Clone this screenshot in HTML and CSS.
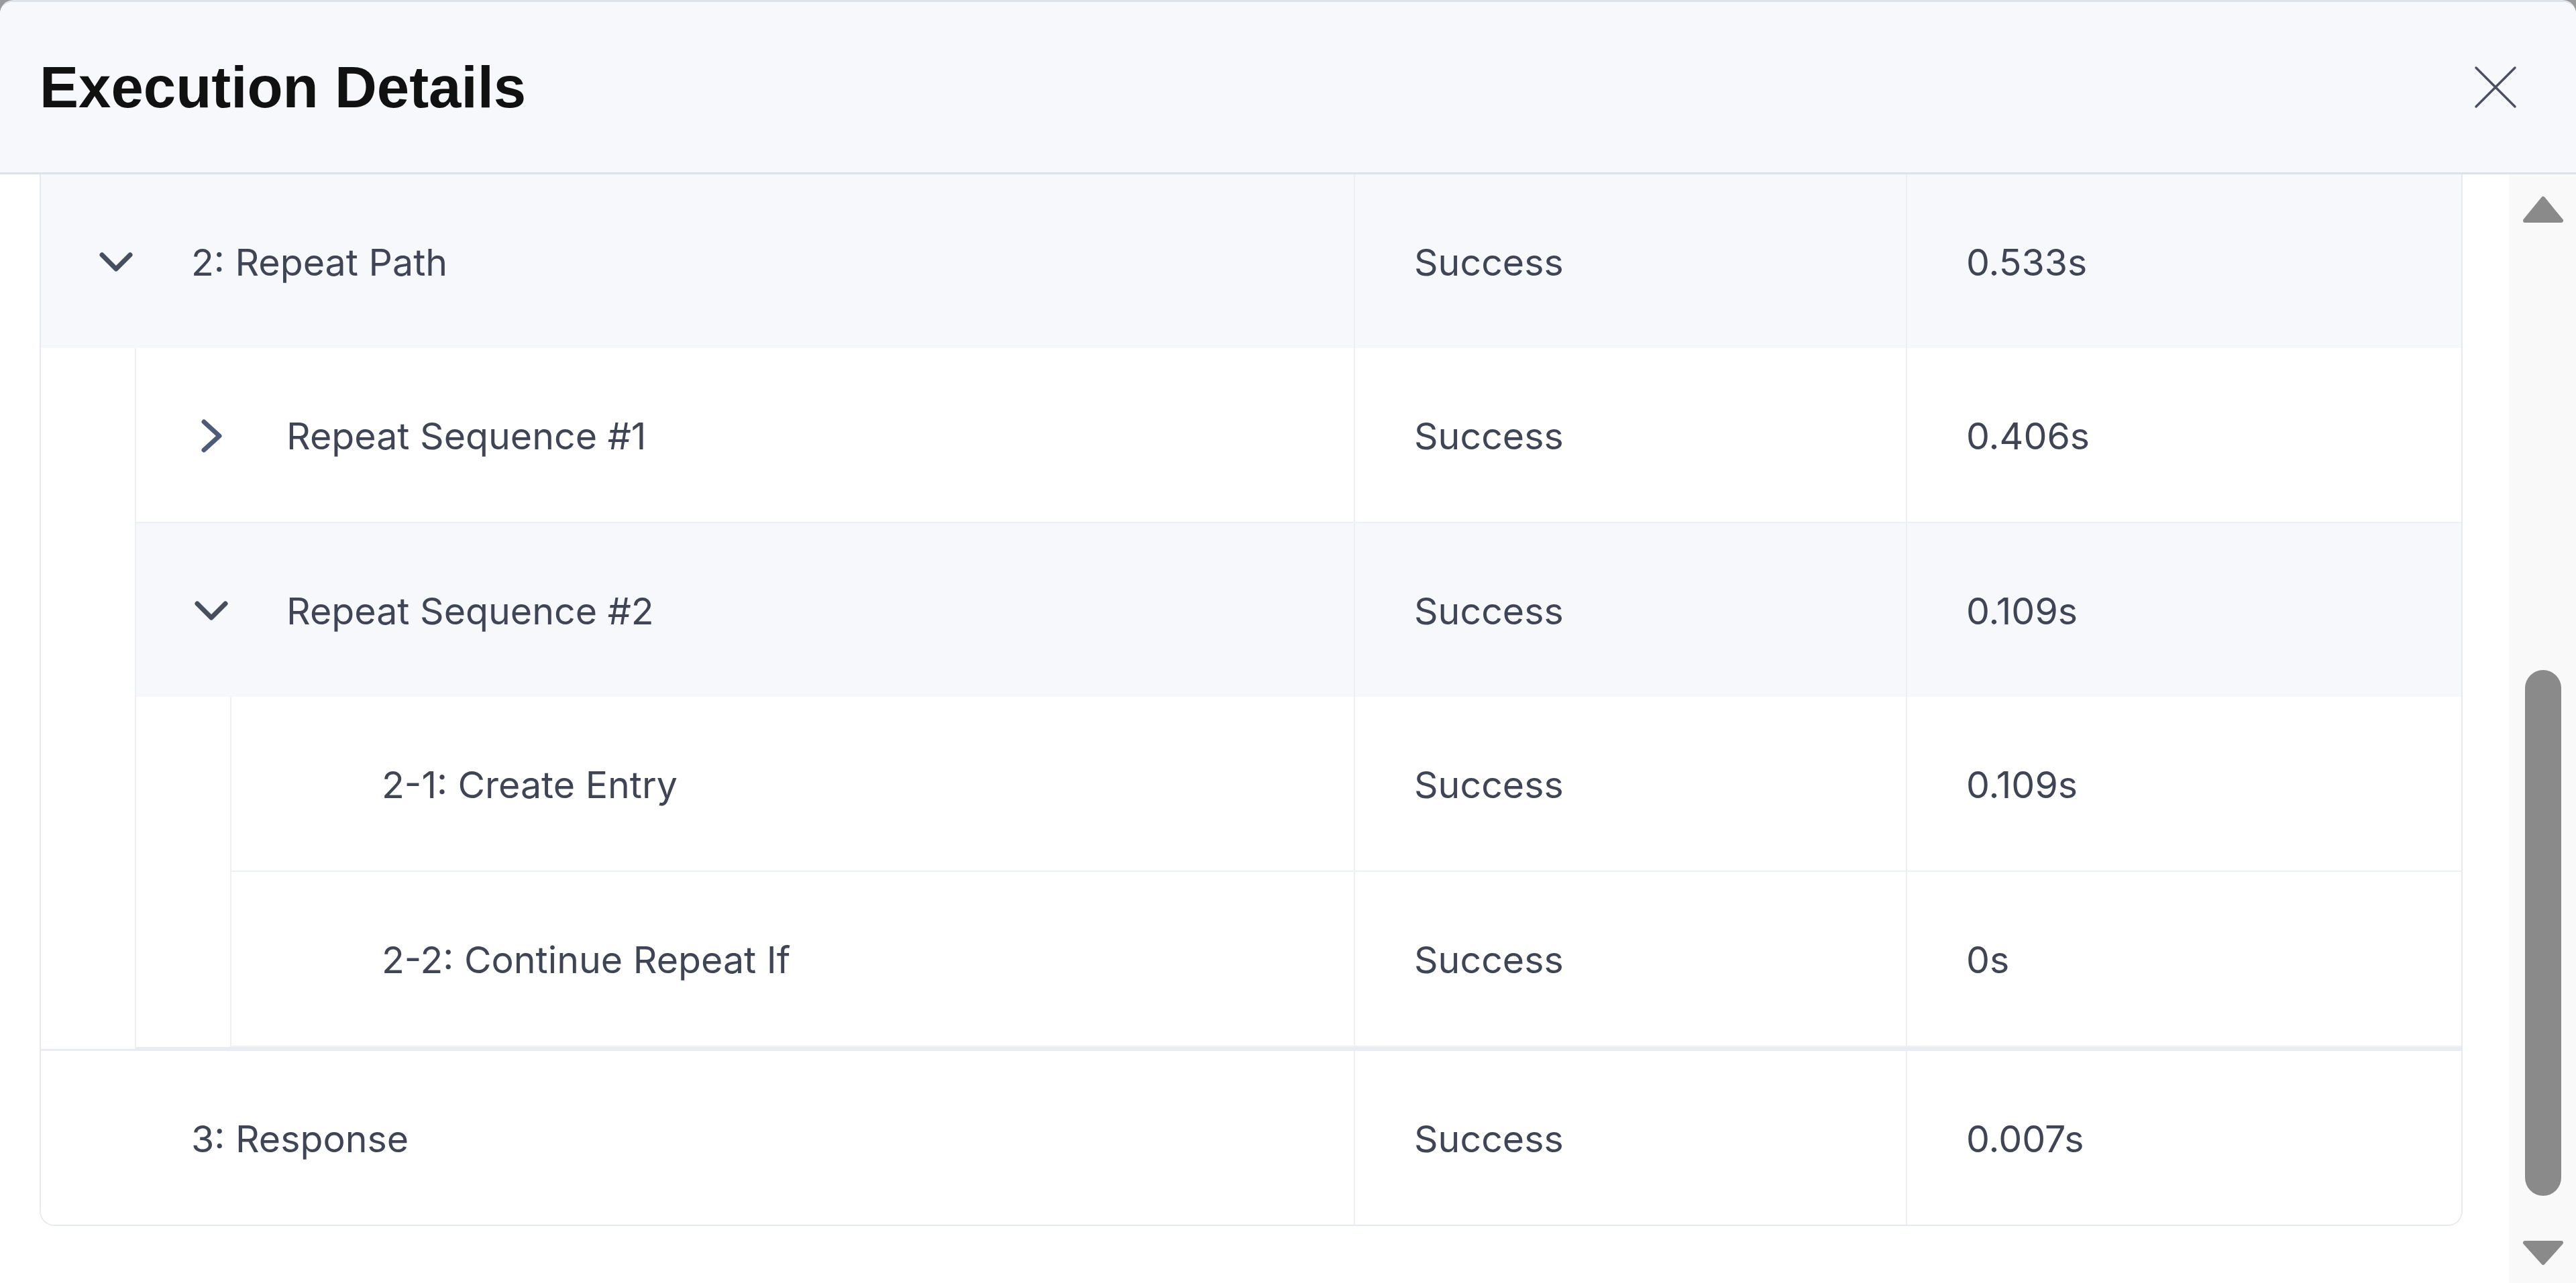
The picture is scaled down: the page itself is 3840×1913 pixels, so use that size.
FILE: index.html
```html
<!DOCTYPE html>
<html lang="en">
<head>
    <meta charset="UTF-8">
    <meta name="viewport" content="width=device-width, initial-scale=1.0">
    <title>Execution Details</title>
    <link rel="stylesheet" href="styles.css">
</head>
<body>
    <div class="modal">
        <header class="modal-header">
            <h1 class="modal-title">Execution Details</h1>
            <button class="close-btn" aria-label="Close">
                <svg width="64" height="64" viewBox="0 0 64 64"><path d="M3 3 L61 61 M61 3 L3 61" /></svg>
            </button>
        </header>
        <div class="modal-body">
            <div class="content">
                <div class="tree-card">
                    <div class="item">
                        <div class="row expanded">
                            <div class="cell name">
                                <span class="toggle"><svg class="chev-down" width="50" height="29" viewBox="0 0 50 29"><path d="M4 4 L25 25 L46 4" /></svg></span>
                                <span class="label">2: Repeat Path</span>
                            </div>
                            <div class="cell status">Success</div>
                            <div class="cell duration">0.533s</div>
                        </div>
                        <div class="children">
                            <div class="item">
                                <div class="row">
                                    <div class="cell name">
                                        <span class="toggle"><svg class="chev-right" width="31" height="50" viewBox="0 0 31 50"><path d="M4 4 L27 25 L4 46" /></svg></span>
                                        <span class="label">Repeat Sequence #1</span>
                                    </div>
                                    <div class="cell status">Success</div>
                                    <div class="cell duration">0.406s</div>
                                </div>
                            </div>
                            <div class="item group-end">
                                <div class="row expanded">
                                    <div class="cell name">
                                        <span class="toggle"><svg class="chev-down" width="50" height="29" viewBox="0 0 50 29"><path d="M4 4 L25 25 L46 4" /></svg></span>
                                        <span class="label">Repeat Sequence #2</span>
                                    </div>
                                    <div class="cell status">Success</div>
                                    <div class="cell duration">0.109s</div>
                                </div>
                                <div class="children">
                                    <div class="item">
                                        <div class="row">
                                            <div class="cell name">
                                                <span class="toggle"></span>
                                                <span class="label">2-1: Create Entry</span>
                                            </div>
                                            <div class="cell status">Success</div>
                                            <div class="cell duration">0.109s</div>
                                        </div>
                                    </div>
                                    <div class="item">
                                        <div class="row">
                                            <div class="cell name">
                                                <span class="toggle"></span>
                                                <span class="label">2-2: Continue Repeat If</span>
                                            </div>
                                            <div class="cell status">Success</div>
                                            <div class="cell duration">0s</div>
                                        </div>
                                    </div>
                                </div>
                            </div>
                        </div>
                    </div>
                    <div class="item last">
                        <div class="row">
                            <div class="cell name">
                                <span class="toggle"></span>
                                <span class="label">3: Response</span>
                            </div>
                            <div class="cell status">Success</div>
                            <div class="cell duration">0.007s</div>
                        </div>
                    </div>
                </div>
            </div>
            <div class="scrollbar">
                <svg class="arrow-up" width="62" height="41" viewBox="0 0 62 41"><path d="M31 4 L58 37 L4 37 Z" /></svg>
                <div class="thumb"></div>
                <svg class="arrow-down" width="62" height="38" viewBox="0 0 62 38"><path d="M4 4 L58 4 L31 34 Z" /></svg>
            </div>
        </div>
    </div>
</body>
</html>
```

FILE: styles.css
```css
* { box-sizing: border-box; margin: 0; padding: 0; }
body { background: #9a9a9a; font-family: Inter, "Noto Sans", sans-serif; overflow: hidden; }

.modal {
    height: 100vh; display: flex; flex-direction: column;
    background: #fff; border-radius: 20px 20px 0 0; overflow: hidden;
    border-top: 3px solid #dfe3ea;
}
.modal-header {
    height: 257px; flex-shrink: 0; display: flex; align-items: center; justify-content: space-between;
    padding: 0 88px 0 59px; background: #f7f8fb; border-bottom: 3px solid #dde2ea;
}
.modal-title {
    font-family: "Liberation Sans", Arial, sans-serif; font-weight: bold; font-size: 87px; color: #111;
}
.close-btn { background: none; border: none; width: 64px; height: 64px; display: flex; cursor: pointer; }
.close-btn path { stroke: #4a5060; stroke-width: 3.5; stroke-linecap: round; fill: none; }

.modal-body { flex: 1; display: flex; overflow: hidden; }
.content { flex: 1; padding: 0 69px 0 59px; overflow: hidden; }

.tree-card {
    border: 2px solid #e6e9ef; border-top: none; border-radius: 0 0 22px 22px; overflow: hidden;
}
.item { border-bottom: 2px solid #edf0f5; }
.item.group-end { border-bottom: 3px solid #e9edf3; }
.tree-card > .item { border-bottom: 3px solid #e9edf3; }
.tree-card > .item.last { border-bottom: none; }
.children { margin-left: 140px; border-left: 2px solid #edf0f5; }
.children > .item:last-child { border-bottom: 2px solid #edf0f5; }
.children > .item.group-end:last-child { border-bottom: 3px solid #e9edf3; }

.row {
    height: 259px; display: grid; grid-template-columns: 1fr 823px 828px;
    color: #3f4555; font-size: 55.5px; background: #fff;
}
.row.expanded { background: #f7f8fb; }
.cell { display: flex; align-items: center; padding-top: 2px; }
.cell.name { padding-left: 80px; }
.cell.status, .cell.duration { border-left: 2px solid #eceff4; padding-left: 88px; }
.toggle { width: 64px; margin-right: 80px; display: flex; justify-content: center; align-items: center; flex-shrink: 0; }
.toggle path { fill: none; stroke-width: 7; stroke-linecap: round; stroke-linejoin: round; }
.chev-down path { stroke: #474e5e; }
.chev-right path { stroke: #4d5a78; }
.label { white-space: nowrap; }

.scrollbar {
    width: 100px; flex-shrink: 0; background: #f9f9f9;
    display: flex; flex-direction: column; align-items: center; padding-left: 2px;
}
.scrollbar path { fill: #8a8a8a; stroke: #8a8a8a; stroke-width: 6; stroke-linejoin: round; }
.arrow-up { margin-top: 32px; }
.thumb { width: 54px; height: 784px; margin: 666px 0 66px; background: #8a8a8a; border-radius: 27px; }
```
